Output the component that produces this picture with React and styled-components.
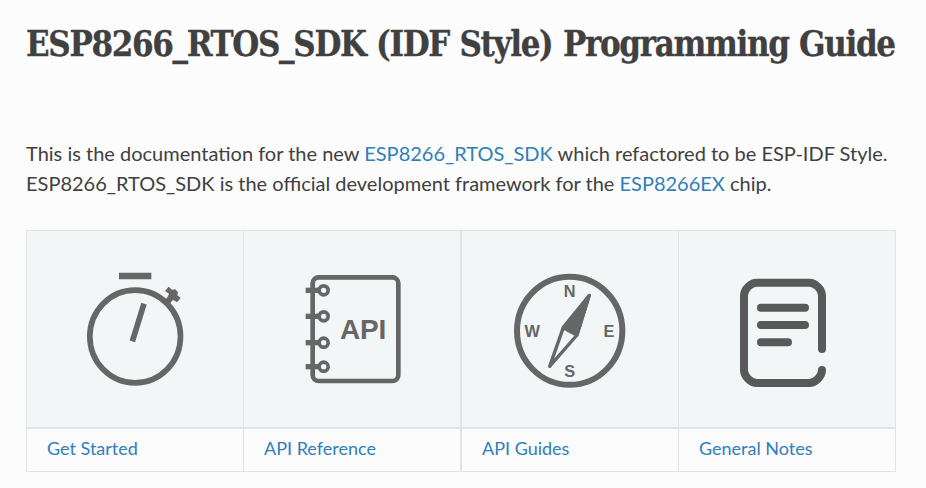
import React from "react";
import styled, { createGlobalStyle } from "styled-components";

const GlobalStyle = createGlobalStyle`
  body { margin: 0; background: #fcfcfc; }
`;

const Page = styled.main`
  box-sizing: border-box;
  height: 488px;
  padding: 20px 30px 0 26px;
  overflow: hidden;
  color: #404040;
  font-family: Lato, sans-serif;
  font-size: 20px;
`;

const Title = styled.h1`
  margin: 0 0 70px;
  height: 48px;
  line-height: 48px;
  white-space: nowrap;
  font-family: "Roboto Slab", "DejaVu Serif Condensed", "DejaVu Serif", serif;
  font-stretch: condensed;
  font-size: 34.5px;
  font-weight: 700;
  letter-spacing: -1.33px;
  word-spacing: 1px;
  -webkit-text-stroke: 0.3px #404040;
`;

const Intro = styled.p`
  margin: 0 0 32px;
  line-height: 30px;
  white-space: nowrap;
`;

const Link = styled.a`
  color: #2f7fbb;
  text-decoration: none;
`;

const Table = styled.div`
  display: grid;
  grid-template-columns: 217px 218px 217px 217px;
  grid-template-rows: 198px 43px;
  width: 869px;
  border: solid #e1e4e5;
  border-width: 1px 0 0 1px;
`;

const Cell = styled.div`
  box-sizing: border-box;
  border-right: ${(p) => (p.$wide ? 2 : 1)}px solid #e1e4e5;
`;

const IconCell = styled(Cell)`
  display: flex;
  justify-content: center;
  padding-top: 29px;
  background: #f3f6f6;
  border-bottom: 2px solid #e1e4e5;
`;

const LabelCell = styled(Cell)`
  padding-left: 20px;
  border-bottom: 1px solid #e1e4e5;
  font-size: 18px;
  line-height: 38px;
`;

const Drawing = styled.svg`
  display: block;
  flex: none;
  width: ${(p) => p.$w || 130}px;
  height: 140px;
  fill: none;
  stroke: ${(p) => p.$ink || "#666"};
  text {
    fill: #666;
    stroke: none;
    font-family: "Liberation Sans", sans-serif;
    font-weight: 700;
  }
`;

function Stopwatch() {
  return (
    <Drawing viewBox="0 0 390 420" strokeWidth="17">
      <path d="M147 48H244" strokeWidth="19" />
      <ellipse cx="195.500" cy="229.500" rx="136" ry="139" />
      <path d="M222 131L187 244" strokeWidth="17" />
      <path d="M287 132L308 106" strokeWidth="18" />
      <path d="M285 93L296 80L306 89L316 88L324 97L322 106L332 114L321 127L309 119L300 121L293 112L297 101Z" fill="#666" stroke="none" />
    </Drawing>
  );
}

function Notebook() {
  return (
    <Drawing viewBox="-9 0 390 420" strokeWidth="14">
      <rect x="68" y="52" width="257" height="311" rx="18" />
      {[91, 169, 248, 320].map((y) => (
        <React.Fragment key={y}>
          <path d={`M47 ${y}H88`} strokeWidth="16" />
          <circle cx="101" cy={y} r="13.500" strokeWidth="11" fill="#f3f6f6" />
        </React.Fragment>
      ))}
      <text x="150" y="238" fontSize="84" textLength="139">API</text>
    </Drawing>
  );
}

function Compass() {
  return (
    <Drawing $w={140} viewBox="0 0 420 420" strokeWidth="18">
      <ellipse cx="209" cy="212.500" rx="158" ry="162" />
      <path d="M268 106L190 202L149 319L231 225Z" strokeWidth="10" strokeLinejoin="round" />
      <path d="M268 106L190 204L231 226Z" fill="#666" strokeWidth="9" strokeLinejoin="round" />
      <g fontSize="49" textAnchor="middle">
        <text x="209" y="111">N</text>
        <text x="97" y="230">W</text>
        <text x="327" y="230">E</text>
        <text x="209" y="352">S</text>
      </g>
    </Drawing>
  );
}

function Note() {
  return (
    <Drawing $ink="#595959" viewBox="6 0 390 420" strokeWidth="24" strokeLinecap="round">
      <path d="M306 267V106C306 88 286 68 268 68H110C92 68 72 88 72 106V331C72 349 92 369 110 369H268C286 369 306 349 306 330" />
      <path d="M123 143.500H255M123 195H255M123 246.500H204" />
    </Drawing>
  );
}

const sections = [
  { label: "Get Started", Icon: Stopwatch },
  { label: "API Reference", Icon: Notebook, wide: true },
  { label: "API Guides", Icon: Compass },
  { label: "General Notes", Icon: Note },
];

export default function App() {
  return (
    <>
      <GlobalStyle />
      <Page>
        <Title>ESP8266_RTOS_SDK (IDF Style) Programming Guide</Title>
        <Intro>
          This is the documentation for the new <Link>ESP8266_RTOS_SDK</Link> which refactored to be ESP-IDF Style.
          <br />
          ESP8266_RTOS_SDK is the official development framework for the <Link>ESP8266EX</Link> chip.
        </Intro>
        <Table>
          {sections.map(({ label, Icon, wide }) => (
            <IconCell key={label} $wide={wide}><Icon /></IconCell>
          ))}
          {sections.map(({ label, wide }) => (
            <LabelCell key={label} $wide={wide}><Link>{label}</Link></LabelCell>
          ))}
        </Table>
      </Page>
    </>
  );
}
